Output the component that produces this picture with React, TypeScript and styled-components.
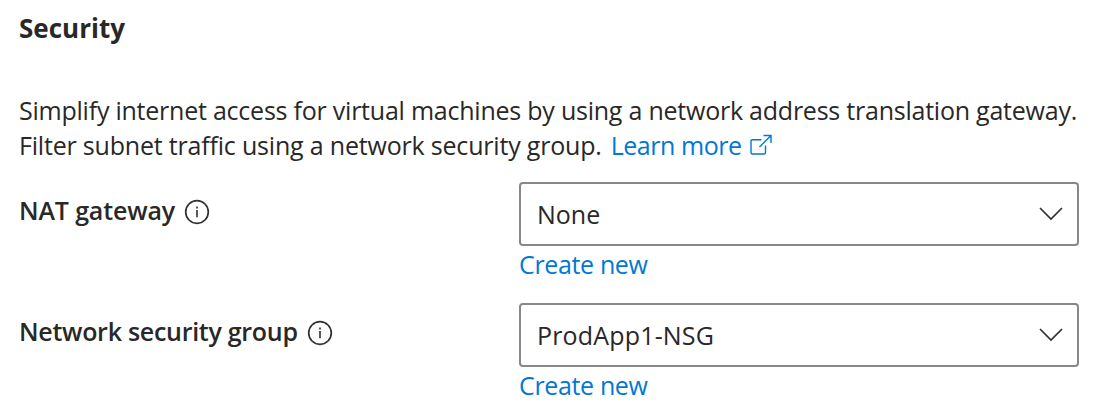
import React from "react";
import styled, { createGlobalStyle } from "styled-components";

const GlobalStyle = createGlobalStyle`
  * { box-sizing: border-box; }
  body { margin: 0; background: #fff; color: #292827; font-family: "Open Sans", "Noto Sans", sans-serif; }
`;

const Panel = styled.section`
  height: 404px;
  padding: 11px 19px 0;
  overflow: hidden;
`;

const Heading = styled.h2`
  margin: 0 0 47px;
  font-size: 26px;
  line-height: 35px;
  font-weight: 700;
`;

const Intro = styled.div`
  margin: 0 0 19px;
  font-size: 25px;
  line-height: 35px;
`;

const Line = styled.p<{ $track: number }>`
  display: flex;
  margin: 0;
  white-space: nowrap;
  letter-spacing: ${(p) => p.$track}px;
`;

const Link = styled.a`
  color: #0078d4;
  text-decoration: none;
  letter-spacing: -0.35px;
`;

const LearnMore = styled(Link)`
  display: flex;
  align-items: center;
  gap: 8px;
  margin-left: 9px;
  letter-spacing: -0.45px;

  svg { margin-bottom: 1px; }
`;

const Field = styled.div`
  display: grid;
  grid-template-columns: 500px 560px;
  height: 121px;
`;

const Label = styled.label`
  display: flex;
  align-items: center;
  gap: 9px;
  height: 60px;
  font-size: 25px;
  font-weight: 600;
`;

const LabelText = styled.span<{ $track: number }>`
  padding-bottom: 4px;
  white-space: nowrap;
  letter-spacing: ${(p) => p.$track}px;
`;

const Select = styled.div<{ $track: number }>`
  display: flex;
  align-items: center;
  justify-content: space-between;
  height: 64px;
  padding: 0 14px 0 16px;
  border: 2px solid #8a8886;
  border-radius: 4px;
  font-size: 25px;
  letter-spacing: ${(p) => p.$track}px;
`;

const Create = styled(Link)`
  display: block;
  font-size: 25px;
  line-height: 36px;
`;

const Info = () => (
  <svg width="26" height="26" viewBox="0 0 26 26" fill="none" stroke="#323130" strokeWidth="1.7">
    <circle cx="13" cy="13" r="11.3" />
    <path d="M13 11v7.3M13 7.4v2" strokeWidth="1.6" />
  </svg>
);

const NewWindow = () => (
  <svg width="22" height="22" viewBox="0 0 22 22" fill="none" stroke="#0078d4" strokeWidth="1.4">
    <path d="M11.500 5.700H2.500Q1 5.700 1 7.200v11.300Q1 20 2.500 20h11.500Q15.500 20 15.500 18.500V11.500M13.500 1.500h7.500v7.500M21 1.500 9.500 13" />
  </svg>
);

const Chevron = () => (
  <svg width="24" height="14" viewBox="0 0 24 14" fill="none" stroke="#323130" strokeWidth="1.7">
    <path d="m1 1 11 11L23 1" />
  </svg>
);

interface RowProps {
  label: string;
  value: string;
  labelTrack: number;
  valueTrack: number;
}

function Row({ label, value, labelTrack, valueTrack }: RowProps) {
  return (
    <Field>
      <Label>
        <LabelText $track={labelTrack}>{label}</LabelText>
        <Info />
      </Label>
      <div>
        <Select $track={valueTrack}><span>{value}</span><Chevron /></Select>
        <Create>Create new</Create>
      </div>
    </Field>
  );
}

export default function App() {
  return (
    <Panel>
      <GlobalStyle />
      <Heading>Security</Heading>
      <Intro>
        <Line $track={-0.23}>
          Simplify internet access for virtual machines by using a network address translation gateway.
        </Line>
        <Line $track={-0.19}>
          Filter subnet traffic using a network security group.
          <LearnMore>Learn more<NewWindow /></LearnMore>
        </Line>
      </Intro>
      <Row label="NAT gateway" value="None" labelTrack={-0.15} valueTrack={0} />
      <Row label="Network security group" value="ProdApp1-NSG" labelTrack={-0.28} valueTrack={0.17} />
    </Panel>
  );
}
